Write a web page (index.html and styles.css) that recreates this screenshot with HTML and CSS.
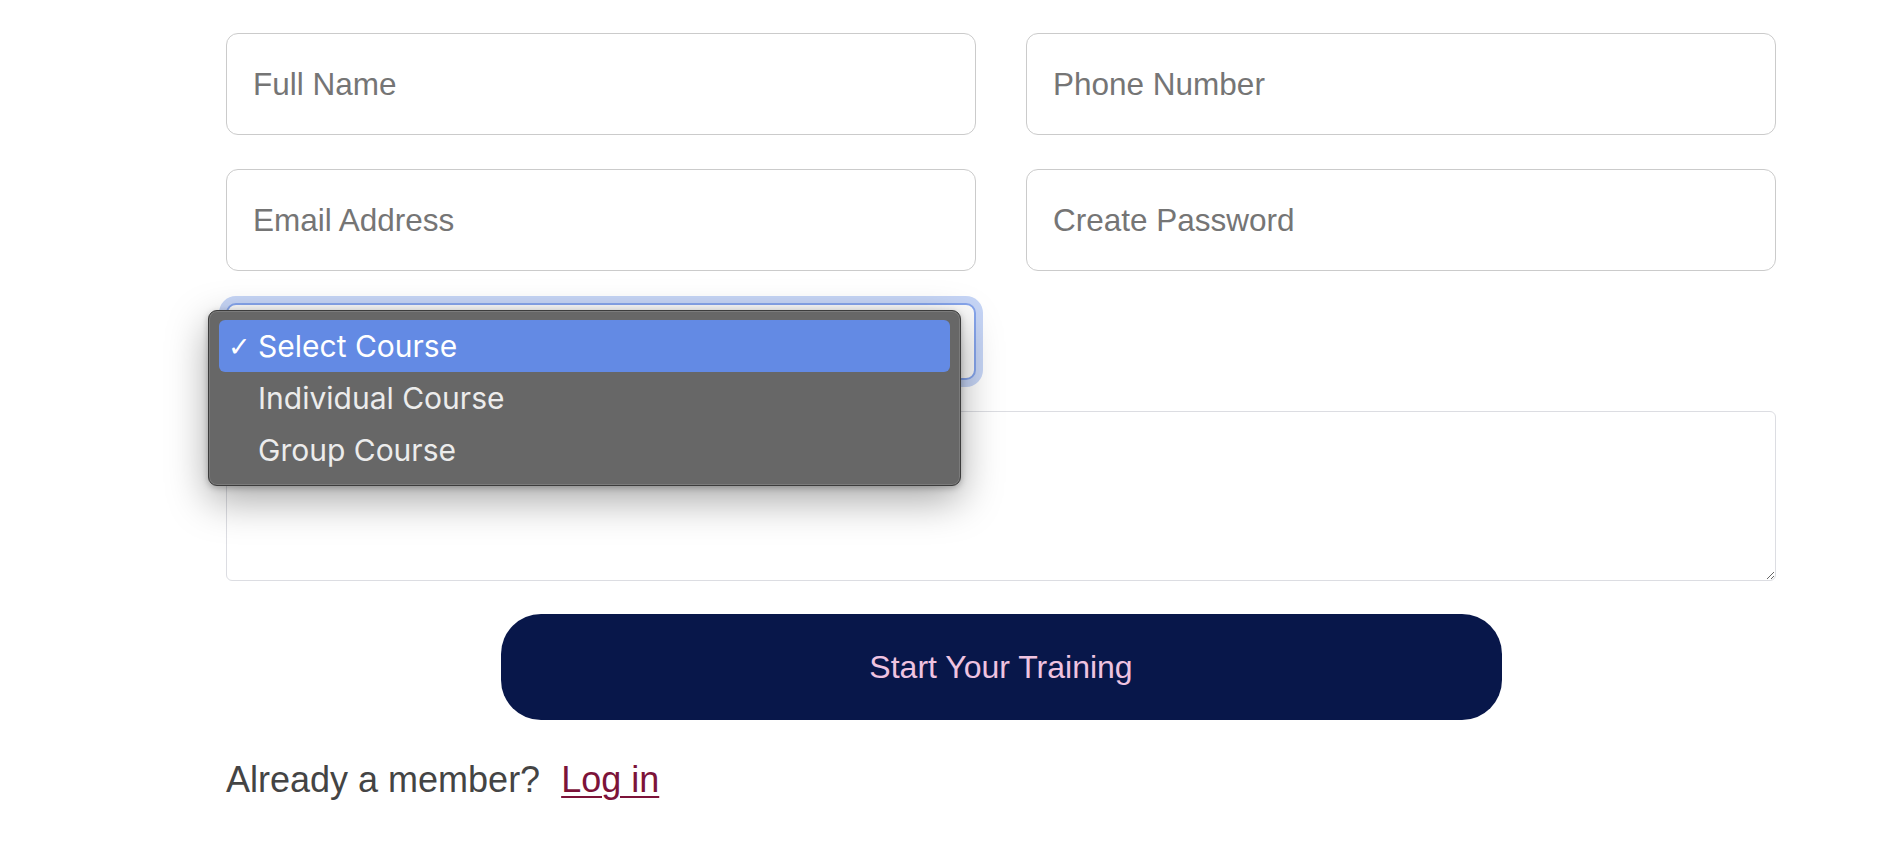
FILE: index.html
```html
<!DOCTYPE html>
<html lang="en">
<head>
<meta charset="utf-8">
<title>Sign up</title>
<link rel="stylesheet" href="styles.css">
</head>
<body>
<form class="signup">
  <div class="row">
    <input class="field" type="text" placeholder="Full Name">
    <input class="field" type="tel" placeholder="Phone Number">
  </div>
  <div class="row row-2">
    <input class="field" type="email" placeholder="Email Address">
    <input class="field" type="password" placeholder="Create Password">
  </div>
  <div class="row row-3">
    <div class="select-wrap">
      <select class="select">
        <option>Select Course</option>
        <option>Individual Course</option>
        <option>Group Course</option>
      </select>
      <div class="popup">
        <div class="opt opt-active"><span class="check">✓</span>Select Course</div>
        <div class="opt">Individual Course</div>
        <div class="opt">Group Course</div>
      </div>
    </div>
  </div>
  <textarea class="message"></textarea>
  <div class="actions">
    <button class="submit" type="button">Start Your Training</button>
  </div>
  <p class="member">Already a member? <a class="login" href="#">Log in</a></p>
</form>
</body>
</html>
```

FILE: styles.css
```css
html, body {
  margin: 0;
  padding: 0;
  background: #ffffff;
}

body {
  font-family: "Liberation Sans", Arial, sans-serif;
}

.signup {
  width: 1550px;
  margin: 0 0 0 226px;
  padding-top: 33px;
  display: flex;
  flex-direction: column;
}

.row {
  display: grid;
  grid-template-columns: 750px 750px;
  column-gap: 50px;
  margin-bottom: 34px;
}

.row-2 {
  margin-bottom: 32px;
}

.row-3 {
  margin-bottom: 31px;
}

.field {
  box-sizing: border-box;
  height: 102px;
  width: 750px;
  border: 1.5px solid #cbcbcb;
  border-radius: 12px;
  padding: 0 26px;
  font-family: "Liberation Sans", Arial, sans-serif;
  font-size: 31.5px;
  color: #333;
  background: #fff;
  outline: none;
}

.field::placeholder {
  color: #757575;
}

.select-wrap {
  position: relative;
  width: 750px;
  height: 77px;
}

.select {
  appearance: none;
  -webkit-appearance: none;
  box-sizing: border-box;
  width: 750px;
  height: 77px;
  border: 2px solid #86a5ec;
  border-radius: 10px;
  background: #fbfbfb;
  box-shadow: 0 0 0 7px #c6d5f6;
  font-family: "Liberation Sans", Arial, sans-serif;
  font-size: 30px;
  color: #333;
  padding: 0 28px;
  outline: none;
}

.popup {
  position: absolute;
  left: -18px;
  top: 7px;
  width: 753px;
  box-sizing: border-box;
  padding: 9px 10px;
  background: #676767;
  border: 1px solid #3c3c3c;
  border-radius: 9px;
  box-shadow: inset 0 0 0 1px #7b7b7b, 0 14px 40px rgba(0, 0, 0, 0.35), 0 2px 6px rgba(0, 0, 0, 0.25);
  font-family: Inter, "Noto Sans", sans-serif;
  font-size: 30px;
  color: #ececec;
  z-index: 2;
}

.opt {
  position: relative;
  height: 52px;
  line-height: 52px;
  padding-left: 39px;
  border-radius: 6px;
}

.opt-active {
  background: #638ae4;
  color: #ffffff;
}

.check {
  position: absolute;
  left: 9px;
  top: 1px;
  font-family: "DejaVu Sans", sans-serif;
  font-size: 27px;
  font-weight: bold;
}

.message {
  box-sizing: border-box;
  width: 1550px;
  height: 170px;
  border: 1.5px solid #dcdde2;
  border-radius: 6px;
  background: #fff;
  margin: 0 0 33px 0;
  display: block;
  outline: none;
}

.actions {
  display: flex;
  justify-content: center;
}

.submit {
  width: 1001px;
  height: 106px;
  border: none;
  border-radius: 40px;
  background: #08174a;
  color: #efc3e0;
  font-family: "Liberation Sans", Arial, sans-serif;
  font-size: 32px;
  cursor: pointer;
}

.member {
  margin: 40px 0 0 0;
  font-size: 36px;
  line-height: 40px;
  color: #444444;
}

.login {
  color: #7c1339;
  margin-left: 11px;
  text-decoration: underline;
  text-decoration-thickness: 2px;
  text-underline-offset: 4px;
}
```
